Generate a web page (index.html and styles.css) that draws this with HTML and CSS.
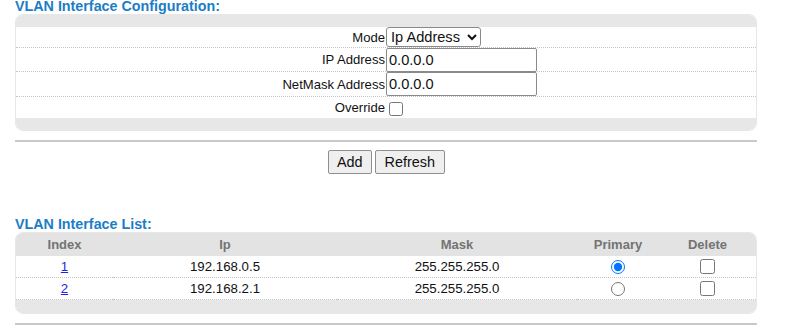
FILE: index.html
```html
<!DOCTYPE html>
<html>
  <head>
    <meta charset="utf-8">
    <meta name="viewport" content="width=device-width, initial-scale=1">
    <title>VLAN Interface</title>
    <link rel="stylesheet" href="styles.css">
  </head>
  <body>
    <div class="page">
      <h3 class="section-title section-title__first">VLAN Interface Configuration:</h3>
      <div class="panel">
        <div class="panel__band"></div>
        <div class="form-row form-row__mode">
          <label class="form-row__label">Mode</label>
          <select class="select-input">
            <option>Ip Address</option>
          </select>
        </div>
        <div class="form-row form-row__ip">
          <label class="form-row__label">IP Address</label>
          <input class="text-input" value="0.0.0.0">
        </div>
        <div class="form-row form-row__mask">
          <label class="form-row__label">NetMask Address</label>
          <input class="text-input" value="0.0.0.0">
        </div>
        <div class="form-row form-row__override">
          <label class="form-row__label">Override</label>
          <input class="check-input check-input__override" type="checkbox">
        </div>
        <div class="panel__band"></div>
      </div>
      <hr class="divider">
      <div class="buttons">
        <button class="button">Add</button>
        <button class="button">Refresh</button>
      </div>

      <h3 class="section-title section-title__list">VLAN Interface List:</h3>
      <div class="panel">
        <table class="list-table">
          <colgroup>
            <col style="width: 97px">
            <col style="width: 224px">
            <col style="width: 240px">
            <col style="width: 82px">
            <col>
          </colgroup>
          <thead>
            <tr>
              <th>Index</th>
              <th>Ip</th>
              <th>Mask</th>
              <th>Primary</th>
              <th>Delete</th>
            </tr>
          </thead>
          <tbody>
            <tr class="list-table__row">
              <td><a href="#" class="list-table__link">1</a></td>
              <td>192.168.0.5</td>
              <td>255.255.255.0</td>
              <td><input class="radio-input" type="radio" name="primary" checked></td>
              <td><input class="check-input" type="checkbox"></td>
            </tr>
            <tr class="list-table__row">
              <td><a href="#" class="list-table__link">2</a></td>
              <td>192.168.2.1</td>
              <td>255.255.255.0</td>
              <td><input class="radio-input" type="radio" name="primary"></td>
              <td><input class="check-input" type="checkbox"></td>
            </tr>
            <tr class="list-table__foot">
              <td colspan="5"></td>
            </tr>
          </tbody>
        </table>
      </div>
      <hr class="divider">
    </div>
  </body>
</html>
```

FILE: styles.css
```css
html {
  font-family: "Liberation Sans", Arial, sans-serif;
  font-size: 13px;
  color: #111;
  background: #fff;
}

body {
  margin: 0;
  padding: 0;
  overflow: hidden;
}

.page {
  width: 742px;
  margin-left: 15px;
}

.section-title {
  margin: 0;
  height: 16px;
  line-height: 16px;
  font-size: 14.3px;
  font-weight: bold;
  color: #1b7dc6;
}

.section-title__first {
  height: 14px;
  line-height: 12px;
}

.section-title__list {
  margin-top: 42px;
}

.panel {
  border: 1px solid #e7e7e7;
  border-radius: 8px;
  overflow: hidden;
  background: #fff;
}

.panel__band {
  height: 12px;
  background: #e7e7e7;
}

.form-row {
  display: flex;
  align-items: center;
  border-bottom: 1px dotted #c4c4c4;
  height: 20px;
}

.form-row__ip {
  height: 23px;
}

.form-row__mask {
  height: 24px;
}

.form-row__override {
  height: 21px;
  border-bottom: none;
}

.form-row__label {
  width: 369px;
  padding-right: 1px;
  text-align: right;
  font-size: 13.1px;
}

.select-input {
  font-family: "Liberation Sans", Arial, sans-serif;
  font-size: 14.6px;
  height: 20px;
  width: 95px;
  padding: 0;
  border: 1px solid #8a8a8a;
  border-radius: 3px;
  background: #fff;
  color: #111;
}

.text-input {
  font-family: "Liberation Sans", Arial, sans-serif;
  font-size: 14.6px;
  box-sizing: border-box;
  width: 151px;
  height: 24px;
  padding: 1px 2px;
  border: 1px solid #8a8a8a;
  border-radius: 2px;
  color: #111;
}

.check-input {
  width: 15px;
  height: 15px;
  margin: 0;
}

.check-input__override {
  width: 14px;
  height: 14px;
  margin-left: 3px;
  margin-top: 2px;
}

.radio-input {
  width: 14px;
  height: 14px;
  margin: 0;
}

.divider {
  margin: 9px 0 0;
  height: 2px;
  border: none;
  background: #c9c9c9;
}

.buttons {
  display: flex;
  justify-content: center;
  gap: 3px;
  margin-top: 8px;
}

.button {
  font-family: "Liberation Sans", Arial, sans-serif;
  font-size: 14.4px;
  height: 24px;
  padding: 0 8.5px;
  background: #efefef;
  border: 1px solid #8f8f8f;
  border-radius: 2px;
  color: #111;
}

.list-table {
  width: 100%;
  border-collapse: collapse;
  table-layout: fixed;
}

.list-table th {
  height: 23px;
  padding: 0;
  background: #e3e3e3;
  color: #737373;
  font-weight: bold;
  text-align: center;
}

.list-table td {
  padding: 0;
  text-align: center;
  vertical-align: middle;
}

.list-table__row td {
  height: 21px;
  border-bottom: 1px dotted #c4c4c4;
  line-height: 0;
  font-size: 13.25px;
}

.list-table__row td:first-child,
.list-table__row td:nth-child(2),
.list-table__row td:nth-child(3) {
  line-height: 16px;
}

.list-table__foot td {
  height: 13px;
  background: #e7e7e7;
}

.list-table__link {
  color: #2323e6;
}
```
